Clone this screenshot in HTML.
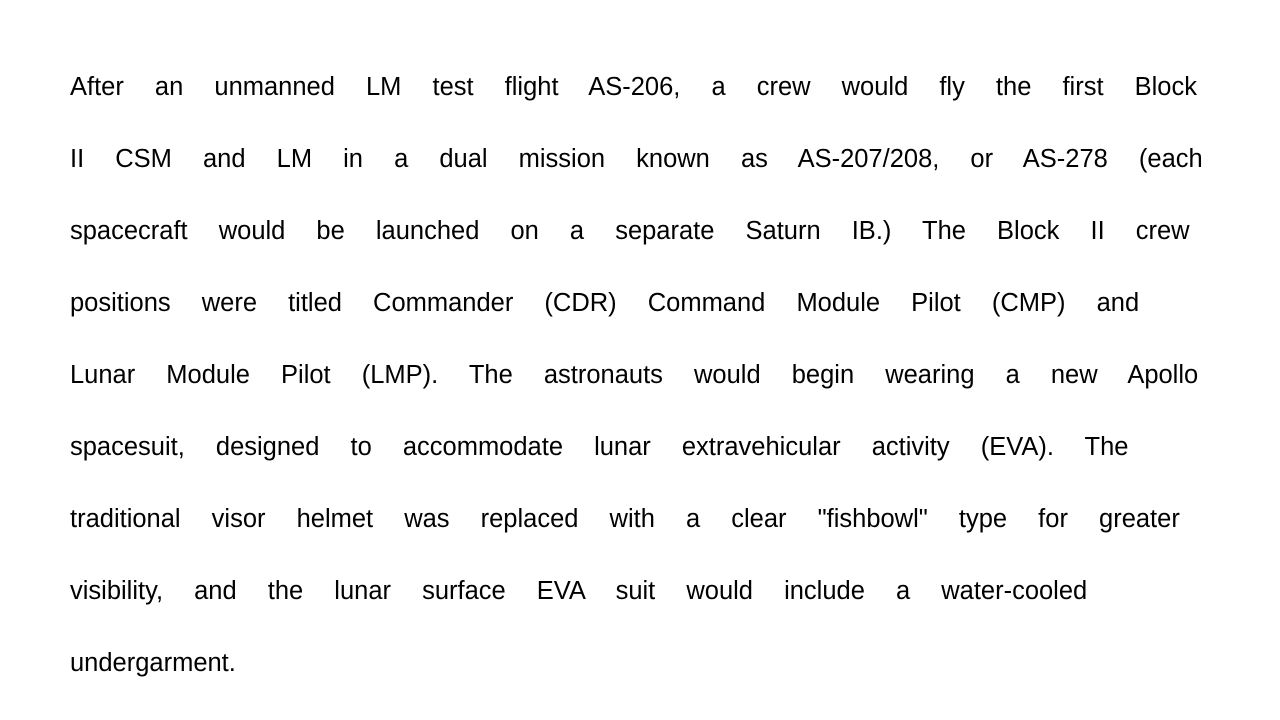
<!DOCTYPE html>
<html>
<head>
<meta charset="utf-8">
<style>
html,body{margin:0;padding:0;background:#fff;width:1280px;height:720px;overflow:hidden;}
.t{position:absolute;left:70px;top:51px;font-family:"Liberation Sans",sans-serif;font-size:25.5px;line-height:72px;word-spacing:24px;color:#000;white-space:nowrap;}
</style>
</head>
<body>
<div class="t">After an unmanned LM test flight AS-206, a crew would fly the first Block<br>II CSM and LM in a dual mission known as AS-207/208, or AS-278 (each<br>spacecraft would be launched on a separate Saturn IB.) The Block II crew<br>positions were titled Commander (CDR) Command Module Pilot (CMP) and<br>Lunar Module Pilot (LMP). The astronauts would begin wearing a new Apollo<br>spacesuit, designed to accommodate lunar extravehicular activity (EVA). The<br>traditional visor helmet was replaced with a clear "fishbowl" type for greater<br>visibility, and the lunar surface EVA suit would include a water-cooled<br>undergarment.</div>
</body>
</html>
